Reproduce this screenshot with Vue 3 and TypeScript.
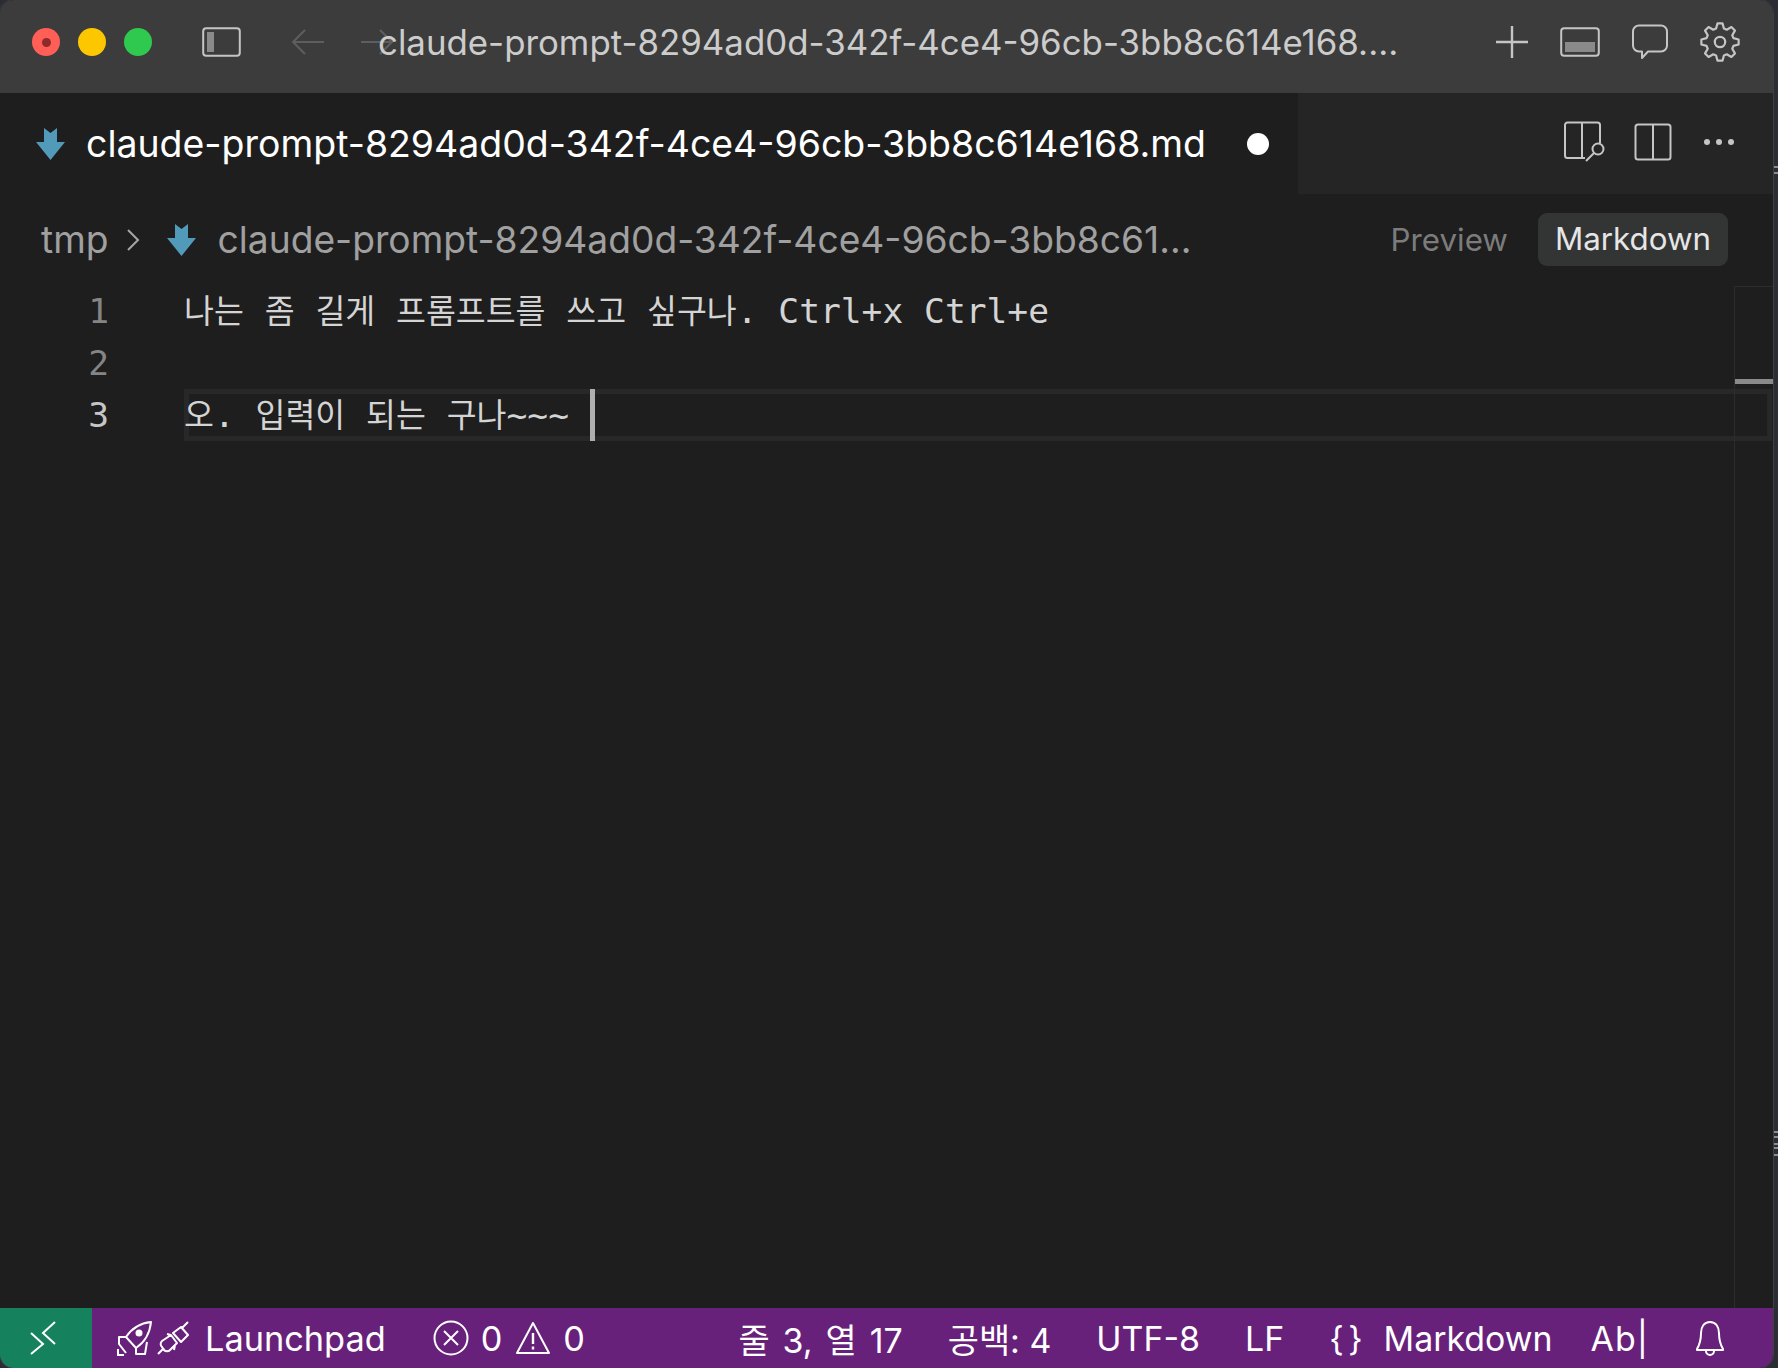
<template>
  <div class="desktop">
    <div class="window">
      <header class="titlebar">
        <div class="lights">
          <span class="light red"><i></i></span>
          <span class="light yellow"></span>
          <span class="light green"></span>
        </div>
        <svg class="ico layout" width="39" height="30" viewBox="0 0 39 30">
          <rect x="1.2" y="1.2" width="36.6" height="27.6" rx="3" fill="none" stroke="#c5c5c5" stroke-width="2" />
          <rect x="5" y="5" width="7" height="20" fill="#8a8a8a" />
        </svg>
        <svg class="ico back" width="36" height="30" viewBox="0 0 36 30">
          <path d="M34 15H3M15 3 3 15l12 12" fill="none" stroke="#5e5e5e" stroke-width="2" />
        </svg>
        <svg class="ico forward" width="36" height="30" viewBox="0 0 36 30">
          <path d="M2 15h31M21 3l12 12-12 12" fill="none" stroke="#5e5e5e" stroke-width="2" />
        </svg>
        <span class="title">claude-prompt-8294ad0d-342f-4ce4-96cb-3bb8c614e168....</span>
        <div class="title-actions">
          <svg width="34" height="34" viewBox="0 0 34 34">
            <path d="M17 1v32M1 17h32" fill="none" stroke="#c5c5c5" stroke-width="2.4" />
          </svg>
          <svg width="40" height="30" viewBox="0 0 40 30">
            <rect x="1.2" y="1.2" width="37.6" height="27.6" rx="3" fill="none" stroke="#c5c5c5" stroke-width="2" />
            <rect x="5" y="15" width="30" height="10" fill="#8a8a8a" />
          </svg>
          <svg width="38" height="36" viewBox="0 0 38 36">
            <path d="M8 1.5h22a6 6 0 0 1 6 6v14a6 6 0 0 1-6 6H17l-6 6.5v-6.500H8a6 6 0 0 1-6-6v-14a6 6 0 0 1 6-6z" fill="none" stroke="#c5c5c5" stroke-width="2" stroke-linejoin="round" />
          </svg>
          <svg width="40" height="40" viewBox="0 0 40 40">
            <path :d="gearPath" fill="none" stroke="#c5c5c5" stroke-width="2.2" stroke-linejoin="round" />
            <circle cx="20" cy="20" r="5.2" fill="none" stroke="#c5c5c5" stroke-width="2.2" />
          </svg>
        </div>
      </header>

      <div class="tabstrip">
        <div class="tab">
          <svg class="md-icon" width="29" height="32" viewBox="0 0 29 32">
            <path d="M8 0l6.500 5L21 0v14h8L14.500 32 0 14h8z" fill="#519aba" />
          </svg>
          <span class="tab-name">{{ fileName }}</span>
          <span class="dirty"></span>
        </div>
        <div class="tab-actions">
          <svg class="split-search" width="42" height="42" viewBox="0 0 42 42">
            <path d="M22 37H4.500A2.500 2.500 0 0 1 2 34.500V4a2.500 2.500 0 0 1 2.500-2.500h30A2.500 2.500 0 0 1 37 4v18M19 1.500V37" fill="none" stroke="#c5c5c5" stroke-width="2" />
            <circle cx="35" cy="28" r="5.500" fill="none" stroke="#c5c5c5" stroke-width="2" />
            <path d="M31 32l-8 8" fill="none" stroke="#c5c5c5" stroke-width="2" />
          </svg>
          <svg width="38" height="38" viewBox="0 0 38 38">
            <rect x="1.500" y="1.500" width="35" height="35" rx="2.500" fill="none" stroke="#c5c5c5" stroke-width="2" />
            <path d="M19 1.500v35" fill="none" stroke="#c5c5c5" stroke-width="2" />
          </svg>
          <svg width="32" height="8" viewBox="0 0 32 8">
            <circle cx="4" cy="4" r="3" fill="#c5c5c5" />
            <circle cx="16" cy="4" r="3" fill="#c5c5c5" />
            <circle cx="28" cy="4" r="3" fill="#c5c5c5" />
          </svg>
        </div>
      </div>

      <div class="crumbs">
        <span class="crumb-folder">tmp</span>
        <svg class="crumb-sep" width="14" height="24" viewBox="0 0 14 24">
          <path d="M2 2l10 10L2 22" fill="none" stroke="#a6a6a6" stroke-width="2" />
        </svg>
        <svg class="md-icon crumb-icon" width="29" height="32" viewBox="0 0 29 32">
          <path d="M8 0l6.500 5L21 0v14h8L14.500 32 0 14h8z" fill="#519aba" />
        </svg>
        <span class="crumb-file">claude-prompt-8294ad0d-342f-4ce4-96cb-3bb8c61...</span>
        <div class="modes">
          <span class="mode">Preview</span>
          <span class="mode active">Markdown</span>
        </div>
      </div>

      <main class="editor">
        <div class="line">
          <span class="num">1</span>
          <div class="code"><span class="ko">나는</span> <span class="ko">좀</span> <span class="ko">길게</span> <span class="ko">프롬프트를</span> <span class="ko">쓰고</span> <span class="ko">싶구나</span>. Ctrl+x Ctrl+e</div>
        </div>
        <div class="line">
          <span class="num">2</span>
          <div class="code"></div>
        </div>
        <div class="line current">
          <span class="num">3</span>
          <div class="code"><span class="ko">오</span>. <span class="ko">입력이</span> <span class="ko">되는</span> <span class="ko">구나</span>~~~ <span class="cursor"></span></div>
        </div>
        <div class="minimap"><span class="slider"></span></div>
      </main>

      <footer class="statusbar">
        <div class="remote">
          <svg width="26" height="34" viewBox="0 0 26 34">
            <path d="M1 12l12 11L1 33M25 1 13 12l12 11" fill="none" stroke="#fff" stroke-width="2" />
          </svg>
        </div>
        <div class="status-left">
          <svg class="rocket" width="36" height="36" viewBox="0 0 36 36">
            <path d="M34 2C24 3 15 8 9 17l10 11C28 22 33 12 34 2zM9 17H2l0 7 7 9M19 28v6h9l2-12" fill="none" stroke="#fff" stroke-width="2" stroke-linejoin="round" />
            <circle cx="22" cy="13" r="3.500" fill="#fff" />
            <path d="M1 29v6h6" fill="none" stroke="#fff" stroke-width="2" />
          </svg>
          <svg class="plug" width="32" height="34" viewBox="0 0 32 34">
            <path d="M31 1l-6 6M16 12l8-6 7 8-7 7zM1 33l6-6M5 20l9-6 6 8-7 7a4 4 0 0 1-6 0l-2-3a4 4 0 0 1 0-6zM10 13l4 1M17 29l1-5" fill="none" stroke="#fff" stroke-width="2" stroke-linejoin="round" />
          </svg>
          <span class="launchpad">Launchpad</span>
          <svg class="err" width="36" height="36" viewBox="0 0 36 36">
            <circle cx="18" cy="18" r="16.500" fill="none" stroke="#fff" stroke-width="2" />
            <path d="M11 11l14 14M25 11 11 25" fill="none" stroke="#fff" stroke-width="2" />
          </svg>
          <span class="count">0</span>
          <svg class="warn" width="36" height="34" viewBox="0 0 36 34">
            <path d="M18 2 2 32h32z" fill="none" stroke="#fff" stroke-width="2" stroke-linejoin="round" />
            <path d="M18 12v11M18 25.500v3" fill="none" stroke="#fff" stroke-width="2.400" />
          </svg>
          <span class="count">0</span>
        </div>
        <div class="status-right">
          <span class="position">줄 3, 열 17</span>
          <span v-for="item in statusItems" :key="item">{{ item }}</span>
          <span class="lang"><span class="braces">{ }</span>Markdown</span>
          <span class="spell">Ab|</span>
          <svg class="bell" width="32" height="36" viewBox="0 0 32 36">
            <path d="M16 2c-6 0-9 5-9 11 0 7-1 11-4 16v1h26v-1c-3-5-4-9-4-16 0-6-3-11-9-11zM12 31a4 4 0 0 0 8 0" fill="none" stroke="#fff" stroke-width="2" stroke-linejoin="round" />
          </svg>
        </div>
      </footer>
    </div>
    <span v-for="y in edgeMarks" :key="y" class="edge-mark" :style="{ top: y + 'px' }"></span>
  </div>
</template>

<script setup lang="ts">
const fileName = 'claude-prompt-8294ad0d-342f-4ce4-96cb-3bb8c614e168.md'
const statusItems = ['공백: 4', 'UTF-8', 'LF']

// bits of the window behind, they show in the sliver on the right
const edgeMarks = [166, 172, 1131, 1136, 1143, 1147, 1154]

// 8 teeth, drawn as a polygon round the centre of a 40x40 box
const buildGear = (teeth: number, outer: number, inner: number) => {
  const pts: string[] = []
  const step = (Math.PI * 2) / teeth
  for (let i = 0; i < teeth; i++) {
    const a = i * step - Math.PI / 2
    const corners: [number, number][] = [
      [a - step * 0.36, inner],
      [a - step * 0.17, outer],
      [a + step * 0.17, outer],
      [a + step * 0.36, inner],
    ]
    for (const [ang, r] of corners) {
      pts.push(`${(20 + Math.cos(ang) * r).toFixed(2)} ${(20 + Math.sin(ang) * r).toFixed(2)}`)
    }
  }
  return `M${pts.join('L')}Z`
}
const gearPath = buildGear(8, 18.8, 14)
</script>

<style>
html,
body {
  margin: 0;
  background: #2a2d33;
}
</style>

<style scoped>
.desktop {
  position: relative;
  width: 1778px;
  height: 1368px;
  background: #2a2d33;
  overflow: hidden;
  font-family: Inter, "Noto Sans CJK KR", sans-serif;
}

.edge-mark {
  position: absolute;
  right: 0;
  width: 4px;
  height: 2px;
  background: #8b8d92;
}

.window {
  width: 1773px;
  height: 1368px;
  display: flex;
  flex-direction: column;
  border-radius: 14px;
  overflow: hidden;
  background: #1e1e1e;
  box-shadow: 0 0 0 1px #3d3f43;
}

.titlebar {
  height: 93px;
  flex: none;
  display: flex;
  align-items: center;
  background: #3c3c3c;
  padding: 0 0 9px 32px;
  box-sizing: border-box;
  color: #cccccc;
}

.lights {
  display: flex;
  gap: 18px;
}

.light {
  width: 28px;
  height: 28px;
  border-radius: 50%;
  display: flex;
  align-items: center;
  justify-content: center;
}

.light i {
  width: 9px;
  height: 9px;
  border-radius: 50%;
  background: #8e2a2a;
}

.red {
  background: #ff5f57;
}

.yellow {
  background: #fdc700;
}

.green {
  background: #2fc94f;
}

.ico {
  flex: none;
}

.layout {
  margin-left: 50px;
}

.back {
  margin-left: 49px;
}

.forward {
  margin-left: 33px;
}

.title {
  margin-left: -17px;
  font-size: 34.85px;
  white-space: nowrap;
}

.title-actions {
  margin-left: auto;
  display: flex;
  align-items: center;
  gap: 31px;
  padding-right: 33px;
}

.tabstrip {
  height: 101px;
  flex: none;
  display: flex;
  background: #252526;
}

.tab {
  width: 1298px;
  flex: none;
  display: flex;
  align-items: center;
  background: #1e1e1e;
  padding-left: 36px;
  box-sizing: border-box;
}

.tab-name {
  margin-left: 21px;
  font-size: 37.45px;
  color: #ffffff;
  white-space: nowrap;
}

.dirty {
  margin-left: auto;
  margin-right: 29px;
  width: 22px;
  height: 22px;
  border-radius: 50%;
  background: #ffffff;
}

.tab-actions {
  flex: 1;
  display: flex;
  align-items: center;
  justify-content: flex-end;
  gap: 31px;
  padding: 0 38px 3px 0;
}

.split-search {
  margin-right: -2px;
}

.crumbs {
  height: 91px;
  flex: none;
  display: flex;
  align-items: center;
  padding: 0 45px 0 41px;
  font-size: 37.2px;
  color: #a0a0a0;
}

.crumb-sep {
  margin-left: 17px;
}

.crumb-icon {
  margin-left: 27px;
}

.crumb-file {
  margin-left: 22px;
  white-space: nowrap;
}

.modes {
  margin-left: auto;
  display: flex;
  align-items: center;
  gap: 30px;
  font-size: 31.3px;
}

.mode {
  color: #7c7c7c;
}

.mode.active {
  background: #333535;
  color: #e6e6e6;
  height: 53px;
  line-height: 53px;
  padding: 0 17px;
  border-radius: 9px;
}

.editor {
  flex: 1;
  position: relative;
  font-family: "DejaVu Sans Mono", "Noto Sans CJK KR", monospace;
  font-size: 34.6px;
}

.line {
  height: 52px;
  display: flex;
}

.num {
  width: 109px;
  flex: none;
  text-align: right;
  line-height: 52px;
  color: #858585;
}

.current .num {
  color: #c6c6c6;
}

.code {
  margin: 0 1px 0 75px;
  flex: 1;
  height: 52px;
  padding-top: 5px;
  line-height: 38px;
  color: #d4d4d4;
  white-space: pre;
  box-sizing: border-box;
}

.current .code {
  border: 5px solid #282828;
  padding: 0;
  position: relative;
  text-indent: -5px;
}

.ko {
  font-family: "Noto Sans CJK KR", sans-serif;
  font-size: 32.5px;
}

.cursor {
  position: absolute;
  width: 5px;
  height: 52px;
  top: -5px;
  background: #aeafad;
}

.minimap {
  position: absolute;
  top: 1px;
  right: 0;
  bottom: 0;
  width: 38px;
  border-left: 1px solid #2c2c2c;
  border-top: 1px solid #2c2c2c;
}

.slider {
  position: absolute;
  top: 92px;
  left: 0;
  right: 0;
  height: 5px;
  background: #8a8a8a;
}

.statusbar {
  height: 60px;
  flex: none;
  display: flex;
  align-items: center;
  background: #68217a;
  color: #ffffff;
  font-size: 34.3px;
}

.remote {
  width: 92px;
  height: 100%;
  flex: none;
  display: flex;
  align-items: center;
  justify-content: center;
  padding-right: 6px;
  box-sizing: border-box;
  background: #16825d;
}

.status-left {
  display: flex;
  align-items: center;
  padding-left: 25px;
}

.plug {
  margin-left: 4px;
}

.launchpad {
  margin-left: 16px;
}

.err {
  margin-left: 47px;
}

.count {
  margin-left: 12px;
}

.warn {
  margin-left: 13px;
}

.status-right {
  margin-left: auto;
  display: flex;
  align-items: center;
  gap: 45px;
  padding-right: 47px;
  font-size: 33.9px;
}

.position {
  word-spacing: 3.5px;
}

.braces {
  margin-right: 21px;
  word-spacing: -5px;
}

.spell {
  margin-left: -7px;
  letter-spacing: 1px;
}

.bell {
  flex: none;
}
</style>
